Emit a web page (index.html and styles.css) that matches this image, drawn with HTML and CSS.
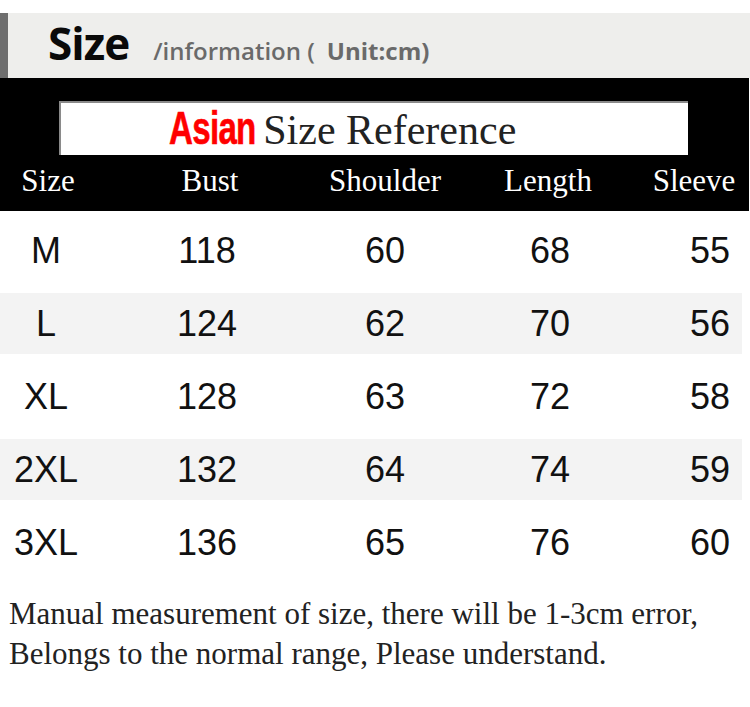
FILE: index.html
```html
<!DOCTYPE html>
<html>
<head>
<meta charset="utf-8">
<link rel="stylesheet" href="styles.css">
</head>
<body>
<div class="page">
  <div class="topbar">
    <span class="title">Size</span>
    <span class="subtitle">/information (</span>
    <span class="unit">Unit:cm)</span>
  </div>
  <div class="blackband">
    <div class="banner">
      <span class="asian">Asian</span>
      <span class="ref">Size Reference</span>
    </div>
    <div class="heads">
      <span class="h h1">Size</span>
      <span class="h h2">Bust</span>
      <span class="h h3">Shoulder</span>
      <span class="h h4">Length</span>
      <span class="h h5">Sleeve</span>
    </div>
  </div>
  <div class="rows">
    <div class="row"><span>M</span><span>118</span><span>60</span><span>68</span><span class="last">55</span></div>
    <div class="row alt"><span>L</span><span>124</span><span>62</span><span>70</span><span class="last">56</span></div>
    <div class="row"><span>XL</span><span>128</span><span>63</span><span>72</span><span class="last">58</span></div>
    <div class="row alt"><span>2XL</span><span>132</span><span>64</span><span>74</span><span class="last">59</span></div>
    <div class="row"><span>3XL</span><span>136</span><span>65</span><span>76</span><span class="last">60</span></div>
  </div>
  <div class="note">
    <p>Manual measurement of size, there will be 1-3cm error,</p>
    <p>Belongs to the normal range, Please understand.</p>
  </div>
</div>
</body>
</html>
```

FILE: styles.css
```css
html, body {
  margin: 0;
  padding: 0;
  background: #ffffff;
}
.page {
  width: 750px;
  height: 707px;
  overflow: hidden;
  background: #ffffff;
}
.topbar {
  margin-top: 13px;
  height: 65px;
  box-sizing: border-box;
  background: #eeeeec;
  border-left: 8px solid #6e6e6e;
  display: flex;
  align-items: baseline;
  padding-left: 40px;
  padding-top: 0px;
  font-family: "Open Sans", "DejaVu Sans", sans-serif;
}
.title {
  font-size: 44px;
  font-weight: 700;
  color: #0a0a0a;
  letter-spacing: -1px;
  margin-right: 24px;
}
.subtitle {
  font-size: 24px;
  font-weight: 600;
  color: #6a6a6a;
  margin-right: 12px;
}
.unit {
  font-size: 24px;
  font-weight: 700;
  color: #6a6a6a;
}
.blackband {
  background: #000000;
  height: 133px;
  padding-top: 23px;
  box-sizing: border-box;
  width: 749px;
}
.banner {
  margin-left: 59px;
  width: 629px;
  height: 54px;
  box-sizing: border-box;
  background: #ffffff;
  border-top: 2px solid #8a8a8a;
  border-left: 2px solid #8a8a8a;
  display: flex;
  align-items: baseline;
  padding-left: 108px;
  padding-top: 0px;
  line-height: 50px;
}
.asian {
  font-family: "Liberation Sans", Arial, sans-serif;
  font-weight: 700;
  font-size: 46px;
  color: #ff0000;
  letter-spacing: -1px;
  display: inline-block;
  transform: scaleX(0.72);
  transform-origin: left center;
  margin-right: -26px;
  -webkit-text-stroke: 0.6px #ff0000;
}
.ref {
  font-family: "Liberation Serif", "DejaVu Serif", serif;
  font-size: 42px;
  color: #222222;
}
.heads {
  display: grid;
  grid-template-columns: 96px 228px 122px 204px 88px;
  margin-top: 4px;
  font-family: "Liberation Serif", "DejaVu Serif", serif;
  font-size: 31px;
  color: #ffffff;
  line-height: 44px;
}
.h {
  text-align: center;
}
.rows {
  padding-top: 3px;
}
.row {
  height: 73px;
  box-sizing: border-box;
  width: 742px;
  padding: 6px 0;
  display: grid;
  grid-template-columns: 90px 234px 122px 208px 88px;
  align-items: center;
  font-family: "Liberation Sans", Arial, sans-serif;
  font-size: 36px;
  color: #111111;
}
.row.alt {
  background: #f3f3f3;
  background-clip: content-box;
}
.row span {
  text-align: center;
}
.row span:first-child {
  padding-left: 2px;
}
.row span.last {
  padding-left: 24px;
}
.note {
  padding-top: 15px;
  padding-left: 9px;
  font-family: "Liberation Serif", "DejaVu Serif", serif;
  font-size: 31px;
  color: #222222;
  line-height: 40px;
}
.note p {
  margin: 0;
}
```
